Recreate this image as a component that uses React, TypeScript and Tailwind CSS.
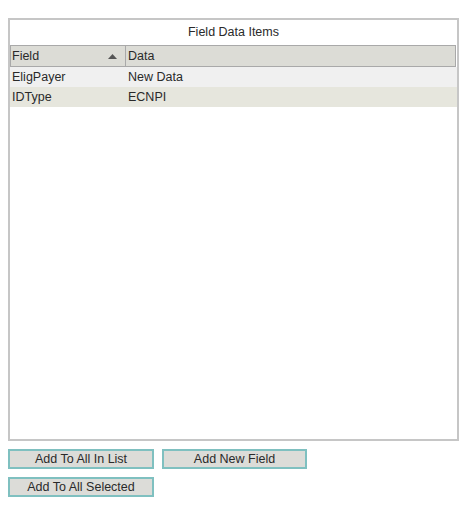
export default function App() {
  const rows = [
    { field: "EligPayer", data: "New Data", bg: "bg-[#f0f0f0]" },
    { field: "IDType", data: "ECNPI", bg: "bg-[#e6e6dd]" },
  ]

  return (
    <div className="w-[474px] h-[525px] bg-white pt-[18px] pl-2 text-[12.5px] text-[#2a2a2a] font-['Liberation_Sans',Arial,sans-serif]">
      {/* Grid panel */}
      <div className="w-[451px] h-[423px] border-2 border-[#c6c6c6] flex flex-col">
        <div className="h-[25px] flex items-center justify-center">Field Data Items</div>
        <div className="mr-[1px] h-[22px] flex bg-[#dcdcd6] border border-[#a9a9a9]">
          <div className="w-[115px] flex items-center justify-between pl-[1px] pr-[8px] border-r border-[#a9a9a9]">
            <span>Field</span>
            <svg width="9" height="5" viewBox="0 0 9 5">
              <polygon points="0,5 4.5,0 9,5" fill="#555" />
            </svg>
          </div>
          <div className="flex items-center pl-[2px]">Data</div>
        </div>
        {rows.map((row) => (
          <div key={row.field} className={`h-[20px] flex items-center ${row.bg}`}>
            <div className="w-[116px] pl-[2px]">{row.field}</div>
            <div className="pl-[2px]">{row.data}</div>
          </div>
        ))}
      </div>

      {/* Buttons */}
      <div className="mt-[8px] flex flex-col gap-[8px]">
        <div className="flex gap-[8px]">
          <button className="w-[146px] h-[20px] bg-[#dcdcd8] border-2 border-[#7fc0c0] leading-none">
            Add To All In List
          </button>
          <button className="w-[145px] h-[20px] bg-[#dcdcd8] border-2 border-[#7fc0c0] leading-none">
            Add New Field
          </button>
        </div>
        <div className="flex">
          <button className="w-[146px] h-[20px] bg-[#dcdcd8] border-2 border-[#7fc0c0] leading-none">
            Add To All Selected
          </button>
        </div>
      </div>
    </div>
  )
}
